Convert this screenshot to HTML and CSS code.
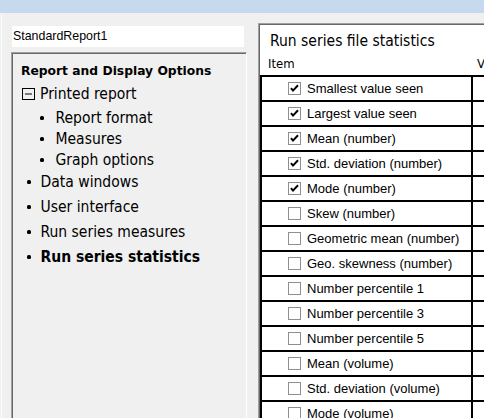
FILE: index.html
```html
<!DOCTYPE html>
<html>
<head>
<meta charset="utf-8">
<title>Report options</title>
<link rel="stylesheet" href="styles.css">
</head>
<body>
<div class="titlebar"></div>
<div class="main">
  <div class="left">
    <div class="namebox">StandardReport1</div>
    <div class="tree">
      <div class="tree-head">Report and Display Options</div>
      <div class="node"><svg class="minus" viewBox="0 0 13 12"><rect x=".5" y=".5" width="12" height="11" fill="none" stroke="#000"/><line x1="3" y1="6" x2="10" y2="6" stroke="#000"/></svg><span>Printed report</span></div>
      <ul class="sub">
        <li class="sub-item"><span class="dot"></span>Report format</li>
        <li class="sub-item"><span class="dot"></span>Measures</li>
        <li class="sub-item"><span class="dot"></span>Graph options</li>
      </ul>
      <ul class="top">
        <li class="top-item"><span class="dot"></span>Data windows</li>
        <li class="top-item"><span class="dot"></span>User interface</li>
        <li class="top-item"><span class="dot"></span>Run series measures</li>
        <li class="top-item active"><span class="dot"></span>Run series statistics</li>
      </ul>
    </div>
  </div>
  <div class="right">
    <div class="panel-title">Run series file statistics</div>
    <div class="grid-head"><div class="col-item">Item</div><div class="col-val">Value</div></div>
    <div class="table">
      <div class="row"><div class="cell-item"><svg class="cb" viewBox="0 0 13 13"><rect x=".5" y=".5" width="12" height="12" fill="#fff" stroke="#8e8f8f"/><path d="M3 6.2l2 2.4 5-5.3" fill="none" stroke="#000" stroke-width="2"/></svg>Smallest value seen</div><div class="cell-val"></div></div>
      <div class="row"><div class="cell-item"><svg class="cb" viewBox="0 0 13 13"><rect x=".5" y=".5" width="12" height="12" fill="#fff" stroke="#8e8f8f"/><path d="M3 6.2l2 2.4 5-5.3" fill="none" stroke="#000" stroke-width="2"/></svg>Largest value seen</div><div class="cell-val"></div></div>
      <div class="row"><div class="cell-item"><svg class="cb" viewBox="0 0 13 13"><rect x=".5" y=".5" width="12" height="12" fill="#fff" stroke="#8e8f8f"/><path d="M3 6.2l2 2.4 5-5.3" fill="none" stroke="#000" stroke-width="2"/></svg>Mean (number)</div><div class="cell-val"></div></div>
      <div class="row"><div class="cell-item"><svg class="cb" viewBox="0 0 13 13"><rect x=".5" y=".5" width="12" height="12" fill="#fff" stroke="#8e8f8f"/><path d="M3 6.2l2 2.4 5-5.3" fill="none" stroke="#000" stroke-width="2"/></svg>Std. deviation (number)</div><div class="cell-val"></div></div>
      <div class="row"><div class="cell-item"><svg class="cb" viewBox="0 0 13 13"><rect x=".5" y=".5" width="12" height="12" fill="#fff" stroke="#8e8f8f"/><path d="M3 6.2l2 2.4 5-5.3" fill="none" stroke="#000" stroke-width="2"/></svg>Mode (number)</div><div class="cell-val"></div></div>
      <div class="row"><div class="cell-item"><svg class="cb" viewBox="0 0 13 13"><rect x=".5" y=".5" width="12" height="12" fill="#fff" stroke="#8e8f8f"/></svg>Skew (number)</div><div class="cell-val"></div></div>
      <div class="row"><div class="cell-item"><svg class="cb" viewBox="0 0 13 13"><rect x=".5" y=".5" width="12" height="12" fill="#fff" stroke="#8e8f8f"/></svg>Geometric mean (number)</div><div class="cell-val"></div></div>
      <div class="row"><div class="cell-item"><svg class="cb" viewBox="0 0 13 13"><rect x=".5" y=".5" width="12" height="12" fill="#fff" stroke="#8e8f8f"/></svg>Geo. skewness (number)</div><div class="cell-val"></div></div>
      <div class="row"><div class="cell-item"><svg class="cb" viewBox="0 0 13 13"><rect x=".5" y=".5" width="12" height="12" fill="#fff" stroke="#8e8f8f"/></svg>Number percentile 1</div><div class="cell-val"></div></div>
      <div class="row"><div class="cell-item"><svg class="cb" viewBox="0 0 13 13"><rect x=".5" y=".5" width="12" height="12" fill="#fff" stroke="#8e8f8f"/></svg>Number percentile 3</div><div class="cell-val"></div></div>
      <div class="row"><div class="cell-item"><svg class="cb" viewBox="0 0 13 13"><rect x=".5" y=".5" width="12" height="12" fill="#fff" stroke="#8e8f8f"/></svg>Number percentile 5</div><div class="cell-val"></div></div>
      <div class="row"><div class="cell-item"><svg class="cb" viewBox="0 0 13 13"><rect x=".5" y=".5" width="12" height="12" fill="#fff" stroke="#8e8f8f"/></svg>Mean (volume)</div><div class="cell-val"></div></div>
      <div class="row"><div class="cell-item"><svg class="cb" viewBox="0 0 13 13"><rect x=".5" y=".5" width="12" height="12" fill="#fff" stroke="#8e8f8f"/></svg>Std. deviation (volume)</div><div class="cell-val"></div></div>
      <div class="row"><div class="cell-item"><svg class="cb" viewBox="0 0 13 13"><rect x=".5" y=".5" width="12" height="12" fill="#fff" stroke="#8e8f8f"/></svg>Mode (volume)</div><div class="cell-val"></div></div>
    </div>
  </div>
</div>
</body>
</html>
```

FILE: styles.css
```css
* { box-sizing: border-box; }
html, body { margin: 0; padding: 0; }
body {
  width: 484px;
  height: 418px;
  overflow: hidden;
  background: #f0f0f0;
  color: #000;
  font-family: "DejaVu Sans Condensed", "DejaVu Sans", sans-serif;
}
.titlebar { height: 13px; background: #c7d9ef; }
.main { display: flex; height: 405px; }
.left {
  width: 257px;
  margin-left: 1px;
  border-left: 1px solid #fbfbfb;
  padding: 13px 11px 0 9px;
  display: flex;
  flex-direction: column;
  flex: none;
}
.namebox {
  height: 21px;
  margin: 0 3px 0 1px;
  padding-left: 1px;
  background: #fff;
  font: 12.4px/21px "Liberation Sans", Arial, sans-serif;
  white-space: nowrap;
}
.tree {
  flex: 1;
  margin-top: 5px;
  border-top: 1px solid #a0a0a0;
  border-left: 1px solid #a0a0a0;
  border-right: 1px solid #fff;
  box-shadow: inset 1px 1px 0 #696969;
  padding: 7px 0 0 9px;
}
.tree-head {
  font: bold 12.3px/22px "DejaVu Sans", sans-serif;
  height: 22px;
  white-space: nowrap;
}
.node {
  display: flex;
  align-items: center;
  height: 24px;
  font-size: 15.5px;
  white-space: nowrap;
}
.minus { width: 13px; height: 12px; margin: 0 5px 0 1px; flex: none; }
.sub, .top { list-style: none; margin: 0; padding: 0; }
.sub { padding-top: 1px; }
.sub-item, .top-item {
  display: flex;
  align-items: center;
  font-size: 15.5px;
  white-space: nowrap;
}
.sub-item { height: 21px; }
.top-item { height: 25px; }
.top-item:first-child { height: 24px; }
.dot { width: 4px; height: 4px; background: #000; border-radius: 1.5px; flex: none; }
.sub-item .dot { margin: 0 12px 0 18.5px; }
.top-item .dot { margin: 0 10px 0 5.5px; }
.active { font-weight: bold; }
.right {
  flex: 1;
  min-width: 0;
  margin-top: 10px;
  background: #fff;
  border-top: 1px solid #a0a0a0;
  border-left: 1px solid #a0a0a0;
  box-shadow: inset 1px 1px 0 #696969;
  overflow: hidden;
}
.panel-title {
  padding: 7px 0 0 11px;
  font-size: 15.5px;
  line-height: 20px;
  white-space: nowrap;
}
.grid-head {
  display: flex;
  margin-top: 2px;
  height: 22px;
  line-height: 22px;
  font-size: 13px;
  white-space: nowrap;
}
.col-item { width: 214px; padding-left: 9px; flex: none; }
.col-val { padding-left: 4px; }
.table {
  margin-left: 1px;
  border-top: 2px solid #000;
  border-left: 2px solid #000;
}
.row { display: flex; height: 25px; border-bottom: 2px solid #000; }
.cell-item {
  width: 209px;
  flex: none;
  display: flex;
  align-items: center;
  padding-left: 26px;
  font: 13px "Liberation Sans", Arial, sans-serif;
  white-space: nowrap;
}
.cell-val { flex: 1; border-left: 2px solid #000; }
.cb { width: 13px; height: 13px; margin-right: 6px; flex: none; }
```
